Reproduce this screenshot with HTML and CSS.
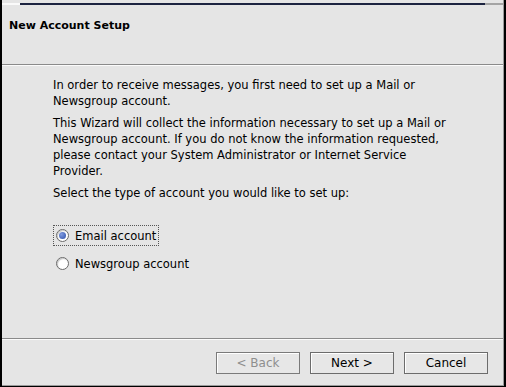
FILE: index.html
```html
<!DOCTYPE html>
<html>
<head>
<meta charset="utf-8">
<link rel="stylesheet" href="styles.css">
</head>
<body>
<div class="window">
  <div class="topline">
    <span class="tl-white"></span><span class="tl-navy"></span><span class="tl-gray"></span>
  </div>
  <div class="header">
    <div class="title">New Account Setup</div>
  </div>
  <div class="sep"></div>
  <div class="content">
    <p class="para">In order to receive messages, you first need to set up a Mail or<br>Newsgroup account.</p>
    <p class="para">This Wizard will collect the information necessary to set up a Mail or<br>Newsgroup account. If you do not know the information requested,<br>please contact your System Administrator or Internet Service<br>Provider.</p>
    <p class="para">Select the type of account you would like to set up:</p>
    <div class="radios">
      <div class="radio-row focused"><span class="radio checked"></span><span class="rlabel">Email account</span></div>
      <div class="radio-row"><span class="radio"></span><span class="rlabel">Newsgroup account</span></div>
    </div>
  </div>
  <div class="sep"></div>
  <div class="buttons">
    <button class="btn disabled">&lt; Back</button>
    <button class="btn">Next &gt;</button>
    <button class="btn">Cancel</button>
  </div>
</div>
</body>
</html>
```
FILE: styles.css
```css
html, body {
  margin: 0;
  padding: 0;
  background: #e5e5e5;
}
.window {
  width: 506px;
  height: 387px;
  box-sizing: border-box;
  background: #e5e5e5;
  border-left: 2px solid #000;
  border-right: 2px solid #000;
  border-bottom: 1px solid #000;
  box-shadow: inset -1px -1px 0 #9a9a9a;
  display: flex;
  flex-direction: column;
  font-family: "DejaVu Sans", sans-serif;
  font-size: 11.5px;
  color: #000;
}
.topline {
  display: flex;
  margin-top: 3px;
  height: 2px;
}
.tl-white { width: 18px; background: #fafafa; }
.tl-navy { width: 465px; background: #1c2340; }
.tl-gray { flex: 1; background: #a4a4a4; margin-right: 1px; }
.header {
  height: 59px;
  box-sizing: border-box;
  padding: 13px 0 0 7px;
}
.title {
  font-weight: bold;
  font-size: 11px;
  line-height: 16px;
}
.sep {
  height: 1px;
  border-top: 1px solid #8a8a8a;
  background: #fbfbfb;
  margin-right: 1px;
}
.content {
  flex: 1;
  padding: 11px 0 0 51px;
}
.para {
  margin: 0 0 6px 0;
  white-space: nowrap;
  line-height: 16px;
}
.radios {
  margin-top: 24px;
  display: flex;
  flex-direction: column;
  gap: 7px;
}
.radio-row {
  display: flex;
  align-items: center;
  gap: 6px;
  height: 21px;
  box-sizing: border-box;
  padding-left: 2px;
  border: 1px dotted transparent;
  align-self: flex-start;
  padding-right: 2px;
}
.radio-row.focused {
  border-color: #555;
}
.radio {
  width: 11px;
  height: 11px;
  border-radius: 50%;
  border: 1px solid #6a6a6a;
  background: #fff;
  box-shadow: inset 1px 1px 1px #c8c8c8;
  position: relative;
}
.radio.checked::after {
  content: "";
  position: absolute;
  left: 2px;
  top: 2px;
  width: 7px;
  height: 7px;
  border-radius: 50%;
  background: radial-gradient(circle at 35% 35%, #7f9ae0, #2e4fa8);
}
.rlabel {
  line-height: 16px;
}
.buttons {
  height: 46px;
  box-sizing: border-box;
  display: flex;
  justify-content: flex-end;
  gap: 10px;
  padding: 12px 16px 0 0;
}
.btn {
  width: 84px;
  height: 22px;
  box-sizing: border-box;
  border: 1px solid #6c6c6c;
  background: #e7e7e7;
  box-shadow: inset 1px 1px 0 #fff;
  font-family: "DejaVu Sans", sans-serif;
  font-size: 12px;
  color: #000;
  padding: 0;
}
.btn.disabled {
  color: #8e8e8e;
  border-color: #7a7a7a;
}
```
